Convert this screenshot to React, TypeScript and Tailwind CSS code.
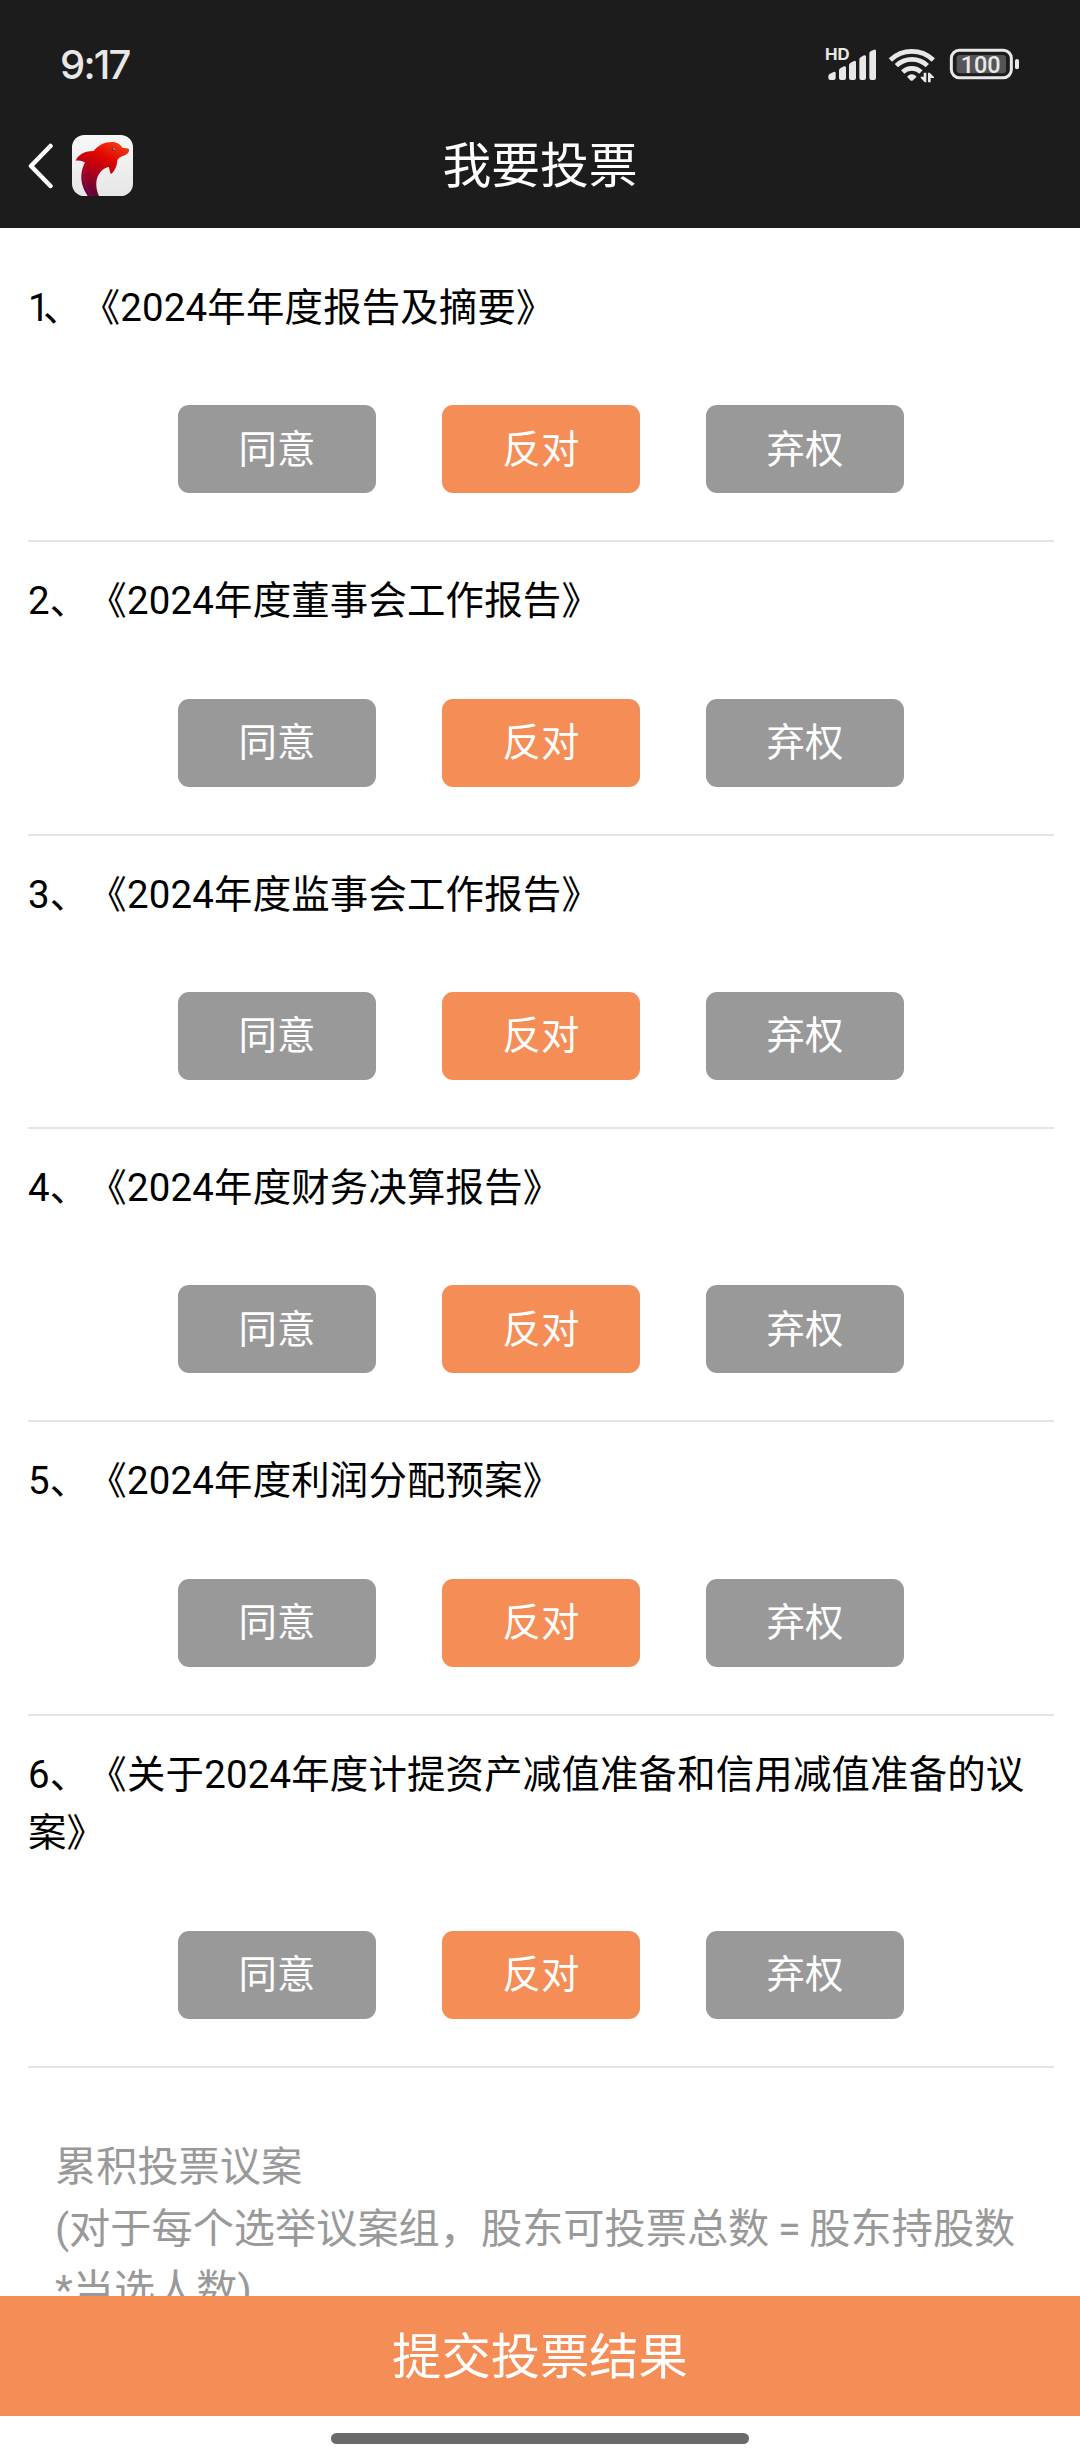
import React, { useState } from 'react';

type Vote = 'agree' | 'oppose' | 'abstain';

interface Proposal {
  id: number;
  title: string;
}

const proposals: Proposal[] = [
  { id: 1, title: '《2024年年度报告及摘要》' },
  { id: 2, title: '《2024年度董事会工作报告》' },
  { id: 3, title: '《2024年度监事会工作报告》' },
  { id: 4, title: '《2024年度财务决算报告》' },
  { id: 5, title: '《2024年度利润分配预案》' },
  { id: 6, title: '《关于2024年度计提资产减值准备和信用减值准备的议案》' },
];

const options: { value: Vote; label: string }[] = [
  { value: 'agree', label: '同意' },
  { value: 'oppose', label: '反对' },
  { value: 'abstain', label: '弃权' },
];

function StatusIcons() {
  return (
    <svg width="240" height="70" viewBox="0 0 720 210" fill="#e8e8e8">
      <text x="75" y="89" fontSize="46" fontWeight="700" fontFamily="Inter, sans-serif" textLength="74" lengthAdjust="spacingAndGlyphs">
        HD
      </text>
      <path d="M85 138q0-5 5-7l11-5q6-2 6 4v14q0 6-6 6H91q-6 0-6-6z" />
      <path d="M117 121q0-5 5-7l10-5q6-2 6 4v31q0 6-6 6h-9q-6 0-6-6z" />
      <path d="M147 105q0-5 5-7l10-5q6-2 6 4v47q0 6-6 6h-9q-6 0-6-6z" />
      <path d="M178 88q0-5 5-7l9-5q6-2 6 4v64q0 6-6 6h-8q-6 0-6-6z" />
      <path d="M208 70q0-5 5-7l9-4q6-2 6 4v81q0 6-6 6h-8q-6 0-6-6z" />
      <g fill="none" stroke="#e8e8e8" strokeWidth="14">
        <path d="M271 90a93 93 0 0 1 129 0" />
        <path d="M289 107a67 67 0 0 1 93 0" />
        <path d="M308 126a40 40 0 0 1 55 0" />
      </g>
      <path d="M321 140q14-14 29 0l-11 11q-4 3-8 0z" />
      <path d="M371 128h8v29h-5l-12-14v-3h9z" />
      <path d="M384 157v-29h5l13 13v3h-10v13z" />
      <rect x="454" y="61" width="180" height="82" rx="24" fill="none" stroke="#e8e8e8" strokeWidth="9" />
      <rect x="470" y="75" width="148" height="55" rx="10" fill="#555" />
      <rect x="645" y="87" width="12" height="31" rx="6" />
      <text x="482" y="129" fontSize="74" fontWeight="500" fontFamily="Roboto, sans-serif" textLength="120" lengthAdjust="spacingAndGlyphs">
        100
      </text>
    </svg>
  );
}

function DolphinLogo() {
  return (
    <svg width="61" height="61" viewBox="0 0 183 183">
      <defs>
        <linearGradient id="plate" x1="0" y1="0" x2="0" y2="1">
          <stop offset="0" stopColor="#f8f8f8" />
          <stop offset="1" stopColor="#e6e6e6" />
        </linearGradient>
        <linearGradient id="skin" x1="130" y1="20" x2="55" y2="183" gradientUnits="userSpaceOnUse">
          <stop offset="0" stopColor="#f23a12" />
          <stop offset="0.3" stopColor="#e30600" />
          <stop offset="0.6" stopColor="#b00018" />
          <stop offset="1" stopColor="#5c0440" />
        </linearGradient>
      </defs>
      <rect width="183" height="183" rx="37" fill="url(#plate)" />
      <path
        d="M11 77C18 62 32 48 65 48C78 31 98 21 120 21C136 21 145 29 151 38C160 40 168 38 171 43C172 53 166 59 152 63C144 66 140 70 136 75C135 94 128 109 117 117C113 111 113 101 110 95C90 101 76 117 73 141C72 157 75 170 81 183H47C32 160 27 142 28 121C29 105 34 91 39 83C31 77 21 75 11 77Z"
        fill="url(#skin)"
      />
      <path d="M40 95C30 125 38 158 58 183" fill="none" stroke="#b0356a" strokeWidth="2" opacity="0.5" />
      <circle cx="124" cy="43" r="5" fill="#6b3030" />
      <circle cx="126" cy="42" r="2" fill="#eee" />
    </svg>
  );
}

function Header() {
  return (
    <header className="h-[228px] shrink-0 bg-[#1c1c1c]">
      <div className="flex h-[130px] items-start justify-between">
        <span className="pl-[60px] pt-[35px] font-[Inter] text-[40px] font-medium leading-[60px] tracking-[-1.8px] text-[#e8e8e8]">
          9:17
        </span>
        <div className="pr-[40px] pt-[30px]">
          <StatusIcons />
        </div>
      </div>
      <div className="grid h-[71px] grid-cols-[1fr_auto_1fr] items-center">
        <div className="flex items-center gap-[18px] pl-[27px]">
          <svg width="27" height="46" viewBox="0 0 27 46" fill="none" stroke="#fff" strokeWidth="4.5" strokeLinecap="round" strokeLinejoin="round">
            <path d="M23.5 3L4 23L23.5 43" />
          </svg>
          <DolphinLogo />
        </div>
        <h1 className="pt-[3px] text-[48.8px] leading-[68px] text-white">我要投票</h1>
      </div>
    </header>
  );
}

interface ProposalItemProps {
  proposal: Proposal;
  selected: Vote;
  onVote: (vote: Vote) => void;
}

function ProposalItem({ proposal, selected, onVote }: ProposalItemProps) {
  return (
    <li className="border-b-2 border-[#e5e5e5] pb-[47px] pt-[30.2px]">
      <p className="text-[38.4px] leading-[58.6px] tracking-[0.2px] text-black">
        {proposal.id === 1 ? (
          <>
            <span className="tracking-[-6.5px]">1</span>
            {`、${proposal.title}`}
          </>
        ) : (
          `${proposal.id}、${proposal.title}`
        )}
      </p>
      <div className="mt-[67.6px] flex justify-center gap-[66px]">
        {options.map(option => (
          <button
            key={option.value}
            onClick={() => onVote(option.value)}
            className={`h-[88px] w-[198px] rounded-[11px] pt-[1px] text-[38.4px] leading-[58px] text-white ${
              selected === option.value ? 'bg-[#f58d56]' : 'bg-[#999999]'
            }`}
          >
            {option.label}
          </button>
        ))}
      </div>
    </li>
  );
}

export default function App() {
  const [votes, setVotes] = useState<Record<number, Vote>>({});

  const handleVote = (id: number, vote: Vote) => {
    setVotes(prev => ({ ...prev, [id]: vote }));
  };

  return (
    <div
      className="flex h-[2460px] w-[1080px] flex-col overflow-hidden bg-white font-[Roboto,'Noto_Sans_CJK_SC',sans-serif] [text-spacing-trim:space-all]"
      lang="zh-CN"
    >
      <Header />
      <main className="min-h-0 flex-1 overflow-hidden pt-[20.8px]">
        <ul className="ml-[28px] mr-[26px]">
          {proposals.map(proposal => (
            <ProposalItem
              key={proposal.id}
              proposal={proposal}
              selected={votes[proposal.id] ?? 'oppose'}
              onVote={vote => handleVote(proposal.id, vote)}
            />
          ))}
        </ul>
        <div className="pl-[55px] pr-[50px] pt-[69.5px] text-[41.2px] leading-[61.5px] text-[#999999] [word-spacing:-1.5px]">
          <p>累积投票议案</p>
          <p>(对于每个选举议案组，股东可投票总数 = 股东持股数*当选人数)</p>
        </div>
      </main>
      <button className="h-[120px] shrink-0 bg-[#f58d56] pt-[2px] text-[49.3px] leading-[70px] text-white">提交投票结果</button>
      <div className="flex h-[44px] shrink-0 justify-center pt-[17px]">
        <div className="h-[11px] w-[418px] rounded-full bg-[#6a6a6a]" />
      </div>
    </div>
  );
}
